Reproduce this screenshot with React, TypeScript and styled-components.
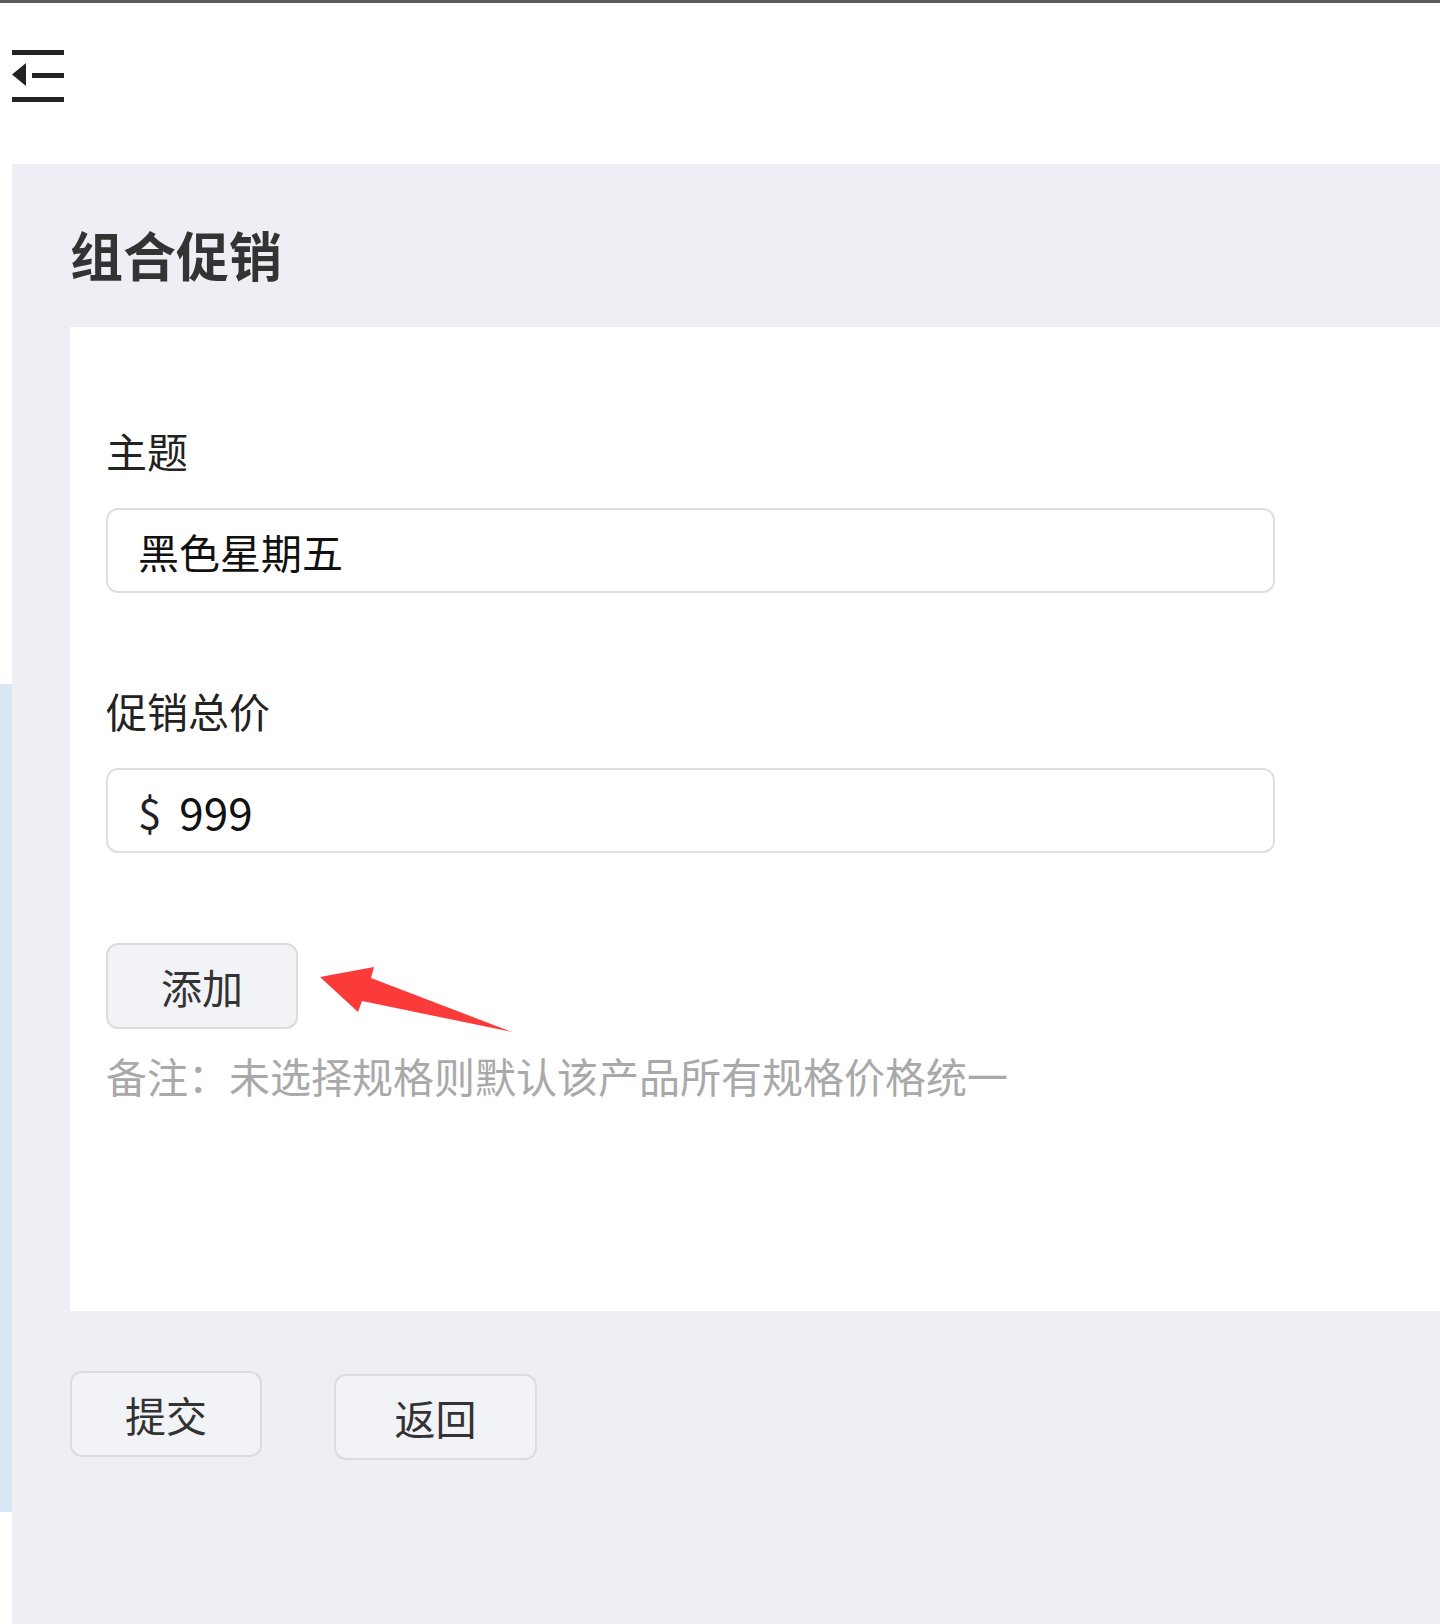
import React from "react";
import styled, { createGlobalStyle } from "styled-components";

const GlobalStyle = createGlobalStyle`
  html, body {
    margin: 0;
    padding: 0;
    background: #ffffff;
  }
  body {
    font-family: "Noto Sans CJK SC", "Noto Sans", sans-serif;
    color: #222;
  }
  * { box-sizing: border-box; }
`;

const Page = styled.div`
  width: 1440px;
  min-height: 1624px;
  display: flex;
  flex-direction: column;
  overflow: hidden;
`;

const TopBar = styled.header`
  height: 164px;
  border-top: 3px solid #5a5a5a;
  background: #ffffff;
  padding: 47px 0 0 12px;
`;

const MenuButton = styled.button`
  border: 0;
  padding: 0;
  background: transparent;
  display: block;
  width: 52px;
  height: 54px;
  cursor: pointer;
`;

const Body = styled.div`
  flex: 1;
  display: flex;
  min-height: 1460px;
`;

const SideStrip = styled.aside`
  width: 12px;
  background: #ffffff;
  padding-top: 520px;
`;

const SideActive = styled.div`
  height: 828px;
  background: #d9e6f4;
`;

const Main = styled.main`
  flex: 1;
  background: #eeeff4;
  padding: 64px 0 0 58px;
`;

const Title = styled.h1`
  margin: 0;
  font-size: 53px;
  line-height: 52px;
  font-weight: 700;
  color: #333333;
`;

const Card = styled.section`
  margin-top: 47px;
  background: #ffffff;
  padding: 103px 0 216px 36px;
`;

const Label = styled.div`
  font-size: 41px;
  line-height: 40px;
  color: #222222;
`;

const FieldBox = styled.div`
  margin-top: 38px;
  width: 1169px;
  height: 85px;
  border: 2px solid #dfdfdf;
  border-radius: 12px;
  background: #ffffff;
  display: flex;
  align-items: center;
  padding-left: 30px;
`;

const Prefix = styled.span`
  font-size: 42px;
  color: #222222;
  margin-right: 18px;
`;

const FieldInput = styled.input`
  flex: 1;
  border: 0;
  outline: none;
  background: transparent;
  font-family: inherit;
  font-size: 41px;
  color: #111111;
  padding: 0;
  height: 60px;
`;

const PriceInput = styled(FieldInput)`
  font-size: 44px;
`;

const FieldGroup = styled.div<{ $mt: number }>`
  margin-top: ${(p) => p.$mt}px;
`;

const AddRow = styled.div`
  position: relative;
  margin-top: 90px;
  display: flex;
`;

const Button = styled.button<{ $w: number }>`
  width: ${(p) => p.$w}px;
  height: 86px;
  background: #f2f3f7;
  border: 2px solid #dcdcdc;
  border-radius: 12px;
  font-family: inherit;
  font-size: 41px;
  color: #333333;
  padding: 0;
  cursor: pointer;
`;

const ArrowMark = styled.svg`
  position: absolute;
  left: 212px;
  top: 22px;
  width: 196px;
  height: 70px;
`;

const Note = styled.p`
  margin: 26px 0 0;
  font-size: 41px;
  line-height: 40px;
  color: #a9a9a9;
`;

const Actions = styled.div`
  margin-top: 60px;
  display: flex;
  align-items: flex-start;
  gap: 72px;
`;

const ReturnButton = styled(Button)`
  margin-top: 3px;
`;

function MenuIcon() {
  return (
    <svg width="52" height="54" viewBox="0 0 52 54">
      <rect x="0" y="0" width="52" height="5" fill="#222" />
      <polygon points="0,24.5 14,13 14,36" fill="#222" />
      <rect x="20" y="23" width="32" height="5" fill="#222" />
      <rect x="0" y="47" width="52" height="5" fill="#222" />
    </svg>
  );
}

export default function App() {
  return (
    <>
      <GlobalStyle />
      <Page>
        <TopBar>
          <MenuButton aria-label="menu">
            <MenuIcon />
          </MenuButton>
        </TopBar>
        <Body>
          <SideStrip>
            <SideActive />
          </SideStrip>
          <Main>
            <Title>组合促销</Title>
            <Card>
              <FieldGroup $mt={0}>
                <Label>主题</Label>
                <FieldBox>
                  <FieldInput defaultValue="黑色星期五" readOnly />
                </FieldBox>
              </FieldGroup>
              <FieldGroup $mt={97}>
                <Label>促销总价</Label>
                <FieldBox>
                  <Prefix>$</Prefix>
                  <PriceInput defaultValue="999" readOnly />
                </FieldBox>
              </FieldGroup>
              <AddRow>
                <Button $w={192}>添加</Button>
                <ArrowMark viewBox="0 0 196 70">
                  <polygon
                    points="2,12 56,2 53,13 194,67 44,36 40,47"
                    fill="#fb3a3a"
                  />
                </ArrowMark>
              </AddRow>
              <Note>备注：未选择规格则默认该产品所有规格价格统一</Note>
            </Card>
            <Actions>
              <Button $w={192}>提交</Button>
              <ReturnButton $w={203}>返回</ReturnButton>
            </Actions>
          </Main>
        </Body>
      </Page>
    </>
  );
}
